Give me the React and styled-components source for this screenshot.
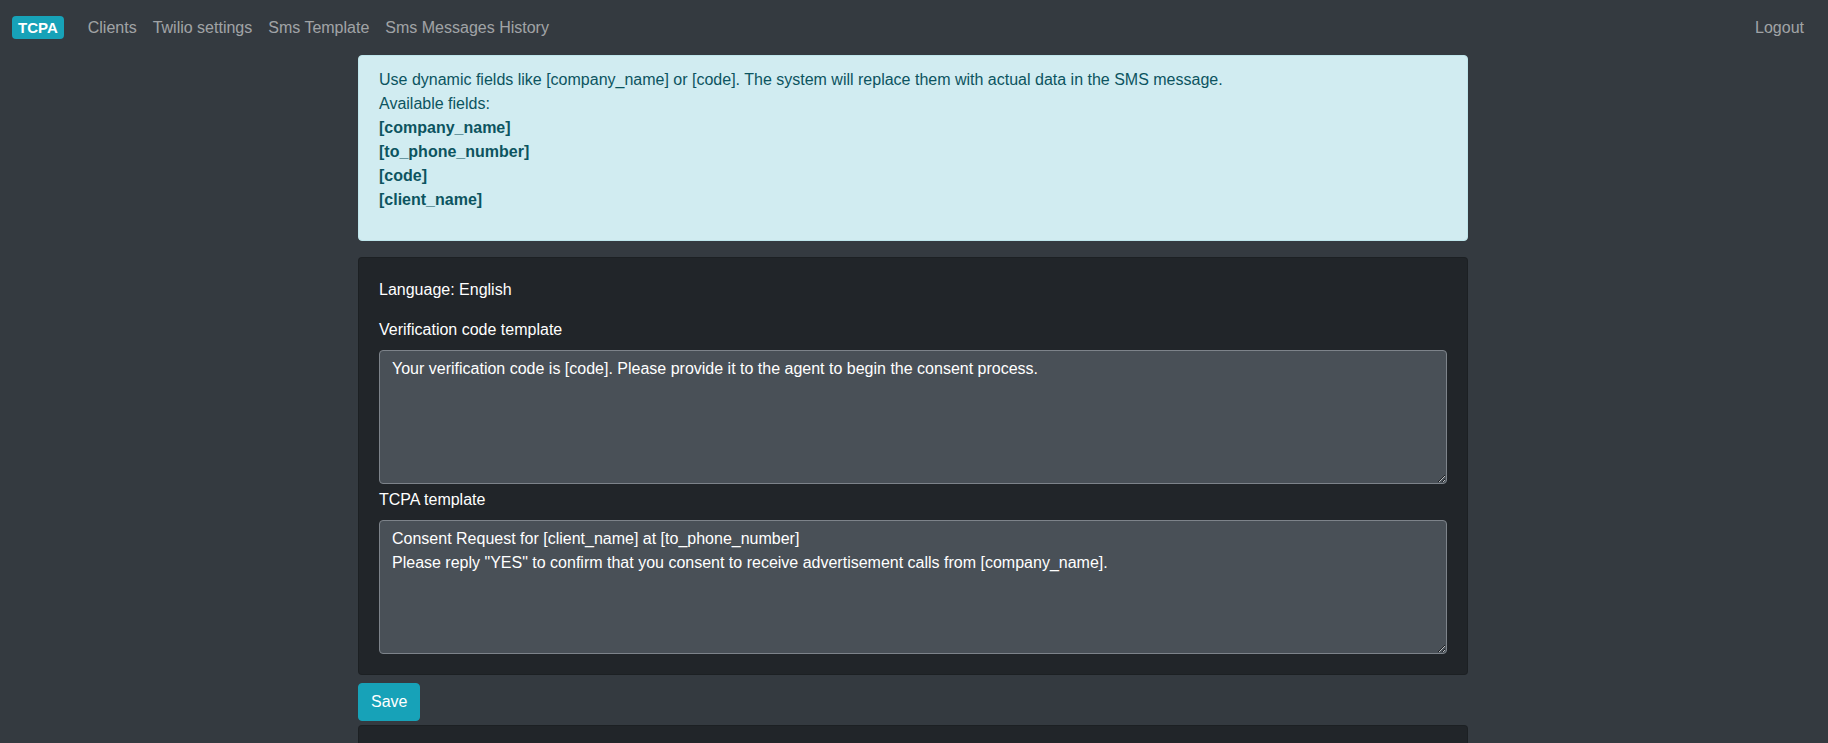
import React from "react"
import styled, { createGlobalStyle } from "styled-components"

const GlobalStyle = createGlobalStyle`
  html, body {
    margin: 0;
    padding: 0;
    background: #343a40;
    font-family: "Liberation Sans", Arial, sans-serif;
    font-size: 16px;
    line-height: 1.5;
    color: #fff;
  }
  * { box-sizing: border-box; }
`

const Navbar = styled.nav`
  display: flex;
  align-items: center;
  height: 54px;
  padding: 1px 16px 0 12px;
`
const Brand = styled.a`
  display: inline-block;
  margin-right: 16px;
  padding: 4px 6px;
  border-radius: 4px;
  background: #17a2b8;
  color: #fff;
  font-size: 15px;
  font-weight: 700;
  line-height: 1;
  text-decoration: none;
`
const NavList = styled.div`
  display: flex;
  flex: 1;
  align-items: center;
`
const NavLink = styled.a`
  padding: 8px;
  color: rgba(255, 255, 255, 0.55);
  text-decoration: none;
  line-height: 24px;
  margin-left: ${p => (p.$right ? "auto" : "0")};
`

const Container = styled.main`
  width: 1110px;
  margin: 1px 0 0 calc(50% - 556px);
`
const Alert = styled.div`
  margin-bottom: 16px;
  padding: 12px 20px;
  border: 1px solid #bee5eb;
  border-radius: 4px;
  background: #d1ecf1;
  color: #0c5460;
`
const Fields = styled.p`
  margin: 0 0 16px;
  font-weight: 700;
`
const Card = styled.section`
  margin-bottom: 8px;
  padding: 20px;
  min-height: ${p => p.$minHeight || "0"};
  border: 1px solid rgba(0, 0, 0, 0.125);
  border-radius: 4px;
  background: #212529;
`
const Language = styled.div`
  margin-bottom: 16px;
`
const Field = styled.div`
  margin-bottom: 4px;
  &:last-child { margin-bottom: 0; }
`
const Label = styled.label`
  display: block;
  margin-bottom: 8px;
`
const TextArea = styled.textarea`
  display: block;
  width: 100%;
  height: 134px;
  padding: 6px 12px;
  border: 1px solid #7d838a;
  border-radius: 4px;
  background: #495057;
  color: #fff;
  font-family: inherit;
  font-size: 16px;
  line-height: 1.5;
  outline: none;
`
const SaveButton = styled.button`
  display: block;
  margin-bottom: 4px;
  padding: 6px 12px;
  border: 1px solid #17a2b8;
  border-radius: 4px;
  background: #17a2b8;
  color: #fff;
  font-family: inherit;
  font-size: 16px;
  line-height: 24px;
  cursor: pointer;
`

const fields = ["[company_name]", "[to_phone_number]", "[code]", "[client_name]"]

const templates = [
  {
    id: "verification",
    label: "Verification code template",
    value: "Your verification code is [code]. Please provide it to the agent to begin the consent process.",
  },
  {
    id: "tcpa",
    label: "TCPA template",
    value:
      'Consent Request for [client_name] at [to_phone_number]\nPlease reply "YES" to confirm that you consent to receive advertisement calls from [company_name].',
  },
]

export default function App() {
  return (
    <>
      <GlobalStyle />
      <Navbar>
        <Brand href="#">TCPA</Brand>
        <NavList>
          <NavLink href="#">Clients</NavLink>
          <NavLink href="#">Twilio settings</NavLink>
          <NavLink href="#">Sms Template</NavLink>
          <NavLink href="#">Sms Messages History</NavLink>
          <NavLink href="#" $right>Logout</NavLink>
        </NavList>
      </Navbar>
      <Container>
        <Alert>
          Use dynamic fields like [company_name] or [code]. The system will replace them with actual data in the SMS message.
          <br />
          Available fields:
          <Fields>
            {fields.map(f => (
              <React.Fragment key={f}>
                {f}
                <br />
              </React.Fragment>
            ))}
          </Fields>
        </Alert>
        <form onSubmit={e => e.preventDefault()}>
          <Card>
            <Language>Language: English</Language>
            {templates.map(t => (
              <Field key={t.id}>
                <Label htmlFor={t.id}>{t.label}</Label>
                <TextArea id={t.id} rows={5} defaultValue={t.value} />
              </Field>
            ))}
          </Card>
          <SaveButton type="submit">Save</SaveButton>
        </form>
        <Card $minHeight="200px" />
      </Container>
    </>
  )
}
